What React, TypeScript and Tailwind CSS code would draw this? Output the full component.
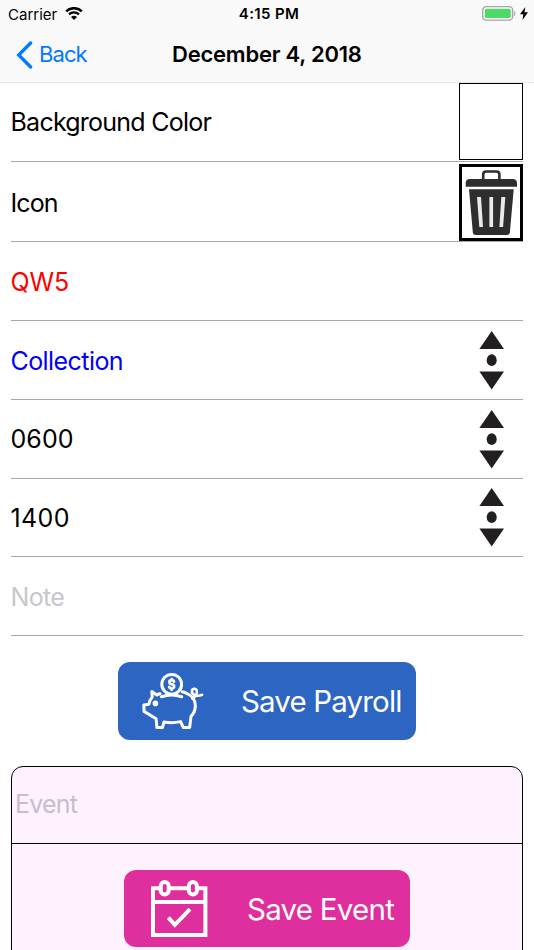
import type { ReactNode } from "react";
import clsx from "clsx";

function StatusBar() {
  return (
    <div className="flex h-7 items-center pl-2 pr-1.5 text-[15px] leading-7 text-black">
      <div className="flex flex-1 items-center gap-2">
        <span className="w-[49px] whitespace-nowrap pt-px">Carrier</span>
        <svg className="mb-[2px] h-[13px] w-[18px]" viewBox="0 0 18 13">
          <path d="M1.2 4.3a11.3 11.3 0 0 1 15.6 0" fill="none" stroke="#000" strokeWidth="2.5" />
          <path d="M4 7.4a7.2 7.2 0 0 1 10 0" fill="none" stroke="#000" strokeWidth="2.2" />
          <path d="M9 13 6 10.1a4.4 4.4 0 0 1 6 0z" />
        </svg>
      </div>
      <span className="-mr-px whitespace-nowrap pl-px font-semibold tracking-[0.35px]">4:15 PM</span>
      <div className="mb-[2px] flex flex-1 items-center justify-end gap-[4px]">
        <svg className="h-[15px] w-[34px]" viewBox="0 0 34 15">
          <rect x="0.7" y="0.7" width="30" height="13.4" rx="3.6" fill="#fff" stroke="#a3a3a5" strokeWidth="1.3" />
          <rect x="2.7" y="2.7" width="26" height="9.4" rx="1.8" fill="#4cd964" />
          <path d="M32.2 5v5c1.6-.6 1.6-4.4 0-5z" fill="#a3a3a5" />
        </svg>
        <svg className="h-[13px] w-[8px]" viewBox="0 0 8 13">
          <path d="M5.3 0 0 7.3h3.3L2.5 13 8 5.3H4.5z" />
        </svg>
      </div>
    </div>
  );
}

function NavBar() {
  return (
    <div className="flex h-[53px] items-center pl-4">
      <button className="flex w-[156px] items-center gap-[6px] text-[22px] text-[#007aff]">
        <svg className="h-[28px] w-[17px]" viewBox="0 0 17 28">
          <path d="M14.6 2 2.7 14l11.9 12" fill="none" stroke="#007aff" strokeWidth="3.3" strokeLinecap="round" />
        </svg>
        <span className="tracking-[-0.9px]">Back</span>
      </button>
      <h1 className="whitespace-nowrap text-[22px] font-semibold tracking-[-0.22px]">December 4, 2018</h1>
    </div>
  );
}

function TrashIcon() {
  return (
    <svg className="h-[68px] w-[54px]" viewBox="464 169 54 68" fill="#2e2e2e">
      <path d="M483.2 180v-5.5q0-3 3-3h10.2q3 0 3 3v5.5" fill="none" stroke="#2e2e2e" strokeWidth="2.6" />
      <path d="M465.7 186.7v-3.4q0-4.3 4.3-4.3h42.7q4.3 0 4.3 4.3v3.4z" />
      <path d="M469 189.3h44.7l-3.8 43q-.3 2.7-3 2.7h-31.1q-2.7 0-3-2.7z" />
      <path d="M477 197h4l2 30h-3.7zM489.4 197h3.7v30h-3.7zM501.3 197h4l-2.2 30h-3.7z" fill="#e9e9e9" />
    </svg>
  );
}

function Stepper() {
  return (
    <svg className="mr-[19px] h-[59px] w-[25px]" viewBox="0 0 25 59" fill="#231f20">
      <path d="M12.7 0 25 18H.4z" />
      <ellipse cx="12.7" cy="29.2" rx="5" ry="5.9" />
      <path d="M.4 40.6H25L12.7 58.4z" />
    </svg>
  );
}

function PiggyIcon() {
  return (
    <svg
      className="h-[60px] w-[64px] shrink-0"
      viewBox="141 671 64 60"
      fill="none"
      stroke="#fff"
      strokeWidth="3"
      strokeLinejoin="round"
      strokeLinecap="round"
    >
      <circle cx="171.7" cy="684.3" r="9.9" />
      <path
        d="M174 681.8q-.3-1.7-2.3-1.7-2.4 0-2.4 2 0 1.7 2.4 2.2 2.5.5 2.5 2.3t-2.5 1.9q-2.2 0-2.5-1.7M171.7 679v1M171.7 688.6v1.2"
        strokeWidth="2.7"
      />
      <path d="M160 693.8q-1.6.4-3.2 1.3l-5-3.5.4 5.4q-2.5 2.8-3.4 7.3l-5 .8.3 6.3 12 7.4.8 8.8h5.6l1.5-5.6q8.5 1.6 16.6-.4l2.6 5.8h6.5l1.3-11q4.7-4.9 4.3-11.4-.5-8.4-9.1-11.9-1.8-.9-4-1.3" />
      <path d="M161.5 696.7q10-3.2 20.2 0" />
      <path d="M192.3 698.6c3-1.8 5.2-5 4.4-8-.7-2.8-5-2.2-4.8.8.3 3.6 5 5.6 10.2 3.4" strokeWidth="2.6" />
      <circle cx="155.4" cy="703.4" r="2.8" fill="#fff" stroke="none" />
    </svg>
  );
}

function CalendarIcon() {
  return (
    <svg className="h-[58px] w-[57px] shrink-0" viewBox="151 880 57 58" fill="none" stroke="#fff" strokeWidth="4">
      <path d="M160 888.3h-7V935h52.4v-46.7H198M169 888.3h19M153 902h52" />
      <rect x="160.7" y="882" width="8" height="12.6" rx="4" />
      <rect x="188.9" y="882" width="8" height="12.6" rx="4" />
      <path d="m168.4 917.7 6.4 7.2 15.2-15.8" />
    </svg>
  );
}

type RowProps = {
  label: string;
  className?: string;
  height?: string;
  children?: ReactNode;
};

function Row({ label, className, height = "h-[79px]", children }: RowProps) {
  return (
    <div className={clsx("flex shrink-0 items-center justify-between border-b border-[#a9a9a9]", height)}>
      <span className={clsx("-ml-[0.5px] whitespace-nowrap text-[25px]", className)}>{label}</span>
      {children}
    </div>
  );
}

export default function App() {
  return (
    <div
      className="flex h-[950px] w-[534px] flex-col overflow-hidden bg-white text-black"
      style={{ fontFamily: 'Inter, "Liberation Sans", sans-serif' }}
    >
      <header className="h-[83px] shrink-0 border-b border-[#e6e6e6] bg-[#f9f9f9]">
        <StatusBar />
        <NavBar />
      </header>

      <main className="flex flex-col px-[11px]">
        <Row label="Background Color" className="pt-[2px] tracking-[-0.76px]">
          <div className="-mt-px h-[77px] w-16 border-[1.5px] border-black" />
        </Row>
        <Row label="Icon" className="pt-1 tracking-[-0.9px]" height="h-[80px]">
          <div className="mt-[2px] flex h-[77px] w-16 items-center justify-center border-[3px] border-black">
            <TrashIcon />
          </div>
        </Row>
        <Row label="QW5" className="pt-1 tracking-[-0.1px] text-[#ff0000]" />
        <Row label="Collection" className="pt-[3px] tracking-[-0.57px] text-[#0000ff]">
          <Stepper />
        </Row>
        <Row label="0600" className="pt-[2px] tracking-[0.1px]">
          <Stepper />
        </Row>
        <Row label="1400" className="pt-[2px] tracking-[0.4px]" height="h-[78px]">
          <Stepper />
        </Row>
        <Row label="Note" className="pt-[3px] tracking-[-0.7px] text-[#c7c7cd]" />

        <button className="mt-[26px] flex h-[78px] w-[298px] shrink-0 items-center self-center rounded-xl bg-[#2d65c3] pl-[23px] text-white">
          <PiggyIcon />
          <span className="ml-9 whitespace-nowrap pt-px text-[29.5px] tracking-[-0.85px]">Save Payroll</span>
        </button>

        <section className="mt-[26px] h-[220px] shrink-0 rounded-t-xl border border-black bg-[#fff2ff]">
          <div className="flex h-[77px] items-center border-b border-black pl-[3px]">
            <span className="text-[25px] tracking-[-0.8px] text-[#c8bdce]">Event</span>
          </div>
          <div className="flex justify-center pt-[26px]">
            <button className="flex h-[77px] w-[286px] items-center rounded-xl bg-[#df2e9e] pl-[27px] text-white">
              <CalendarIcon />
              <span className="ml-[39px] whitespace-nowrap pt-px text-[29.5px] tracking-[-0.75px]">Save Event</span>
            </button>
          </div>
        </section>
      </main>
    </div>
  );
}
